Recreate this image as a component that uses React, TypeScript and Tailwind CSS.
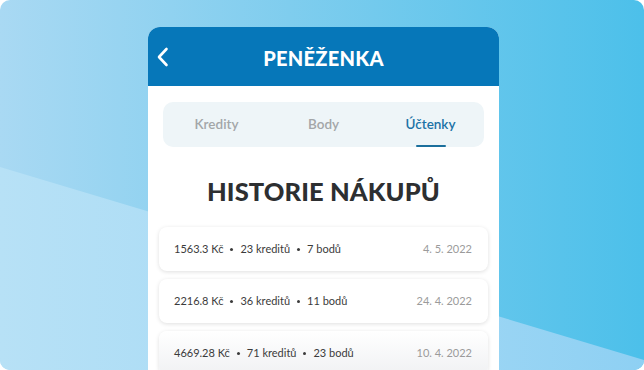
import React from "react";

const tabs = ["Kredity", "Body", "Účtenky"];

const receipts = [
  { price: "1563.3 Kč", credits: "23 kreditů", points: "7 bodů", date: "4. 5. 2022" },
  { price: "2216.8 Kč", credits: "36 kreditů", points: "11 bodů", date: "24. 4. 2022" },
  { price: "4669.28 Kč", credits: "71 kreditů", points: "23 bodů", date: "10. 4. 2022" },
];

function Dot() {
  return <span className="mx-[7px] w-[3px] h-[3px] rounded-full bg-[#3b3b3b]" />;
}

export default function App() {
  return (
    <div className="w-[644px] h-[370px] bg-white overflow-hidden font-['Lato','Liberation_Sans',sans-serif]">
      <div className="relative w-full h-full rounded-[10px] overflow-hidden bg-[linear-gradient(90deg,#a9d9f3_0%,#7fcdee_45%,#4cc0ea_100%)]">
        {/* lighter diagonal band */}
        <div className="absolute inset-0 bg-[linear-gradient(90deg,#b7e1f6_0%,#a6daf5_50%,#8ed0f3_100%)] [clip-path:polygon(0_167px,100%_360px,100%_100%,0_100%)]" />

        <div className="relative flex pl-[148px] pt-[27px]">
          <div className="w-[351px] h-[400px] bg-white rounded-t-[12px] overflow-hidden">
            {/* Header */}
            <div className="relative h-[59px] bg-[#0677b9] flex items-center justify-center">
              <svg
                className="absolute left-[8px] top-[20px]"
                width="14"
                height="20"
                viewBox="0 0 14 20"
                fill="none"
              >
                <path d="M10.5 2 L3 10 L10.5 18" stroke="white" strokeWidth="2.6" strokeLinecap="round" strokeLinejoin="round" />
              </svg>
              <span className="text-white text-[20px] font-black tracking-[0.3px] leading-none pt-[3px]">PENĚŽENKA</span>
            </div>

            <div className="px-[11px] pt-[16px]">
              {/* Tabs */}
              <div className="mx-[4px] h-[45px] rounded-[10px] bg-[#eef5f8] grid grid-cols-3">
                {tabs.map((t, i) => (
                  <div key={t} className="relative flex items-center justify-center">
                    <span
                      className={`text-[13.5px] font-semibold ${
                        i === 2 ? "text-[#1a72a6]" : "text-[#a3a6a8]"
                      }`}
                    >
                      {t}
                    </span>
                    {i === 2 && (
                      <div className="absolute bottom-0 left-1/2 -translate-x-1/2 w-[30px] h-[2.5px] rounded-full bg-[#1b6f9c]" />
                    )}
                  </div>
                ))}
              </div>

              <h1 className="mt-[28px] text-center text-[25.5px] leading-[32px] font-black text-[#2d2f31] tracking-[0.1px]">
                HISTORIE NÁKUPŮ
              </h1>

              {/* Rows */}
              <div className="mt-[20px] flex flex-col gap-[8px]">
                {receipts.map((r, i) => (
                  <div
                    key={r.date}
                    className={`h-[44px] rounded-[8px] shadow-[0_1px_4px_rgba(0,0,0,0.13)] flex items-center justify-between pl-[15px] pr-[16px] text-[11px] ${
                      i === 2 ? "bg-[linear-gradient(180deg,#ffffff_0%,#f0f1f3_100%)]" : "bg-white"
                    }`}
                  >
                    <div className="flex items-center text-[#3b3b3b]">
                      <span>{r.price}</span>
                      <Dot />
                      <span>{r.credits}</span>
                      <Dot />
                      <span>{r.points}</span>
                    </div>
                    <span className="text-[#9b9b9b]">{r.date}</span>
                  </div>
                ))}
              </div>
            </div>
          </div>
        </div>
      </div>
    </div>
  );
}
